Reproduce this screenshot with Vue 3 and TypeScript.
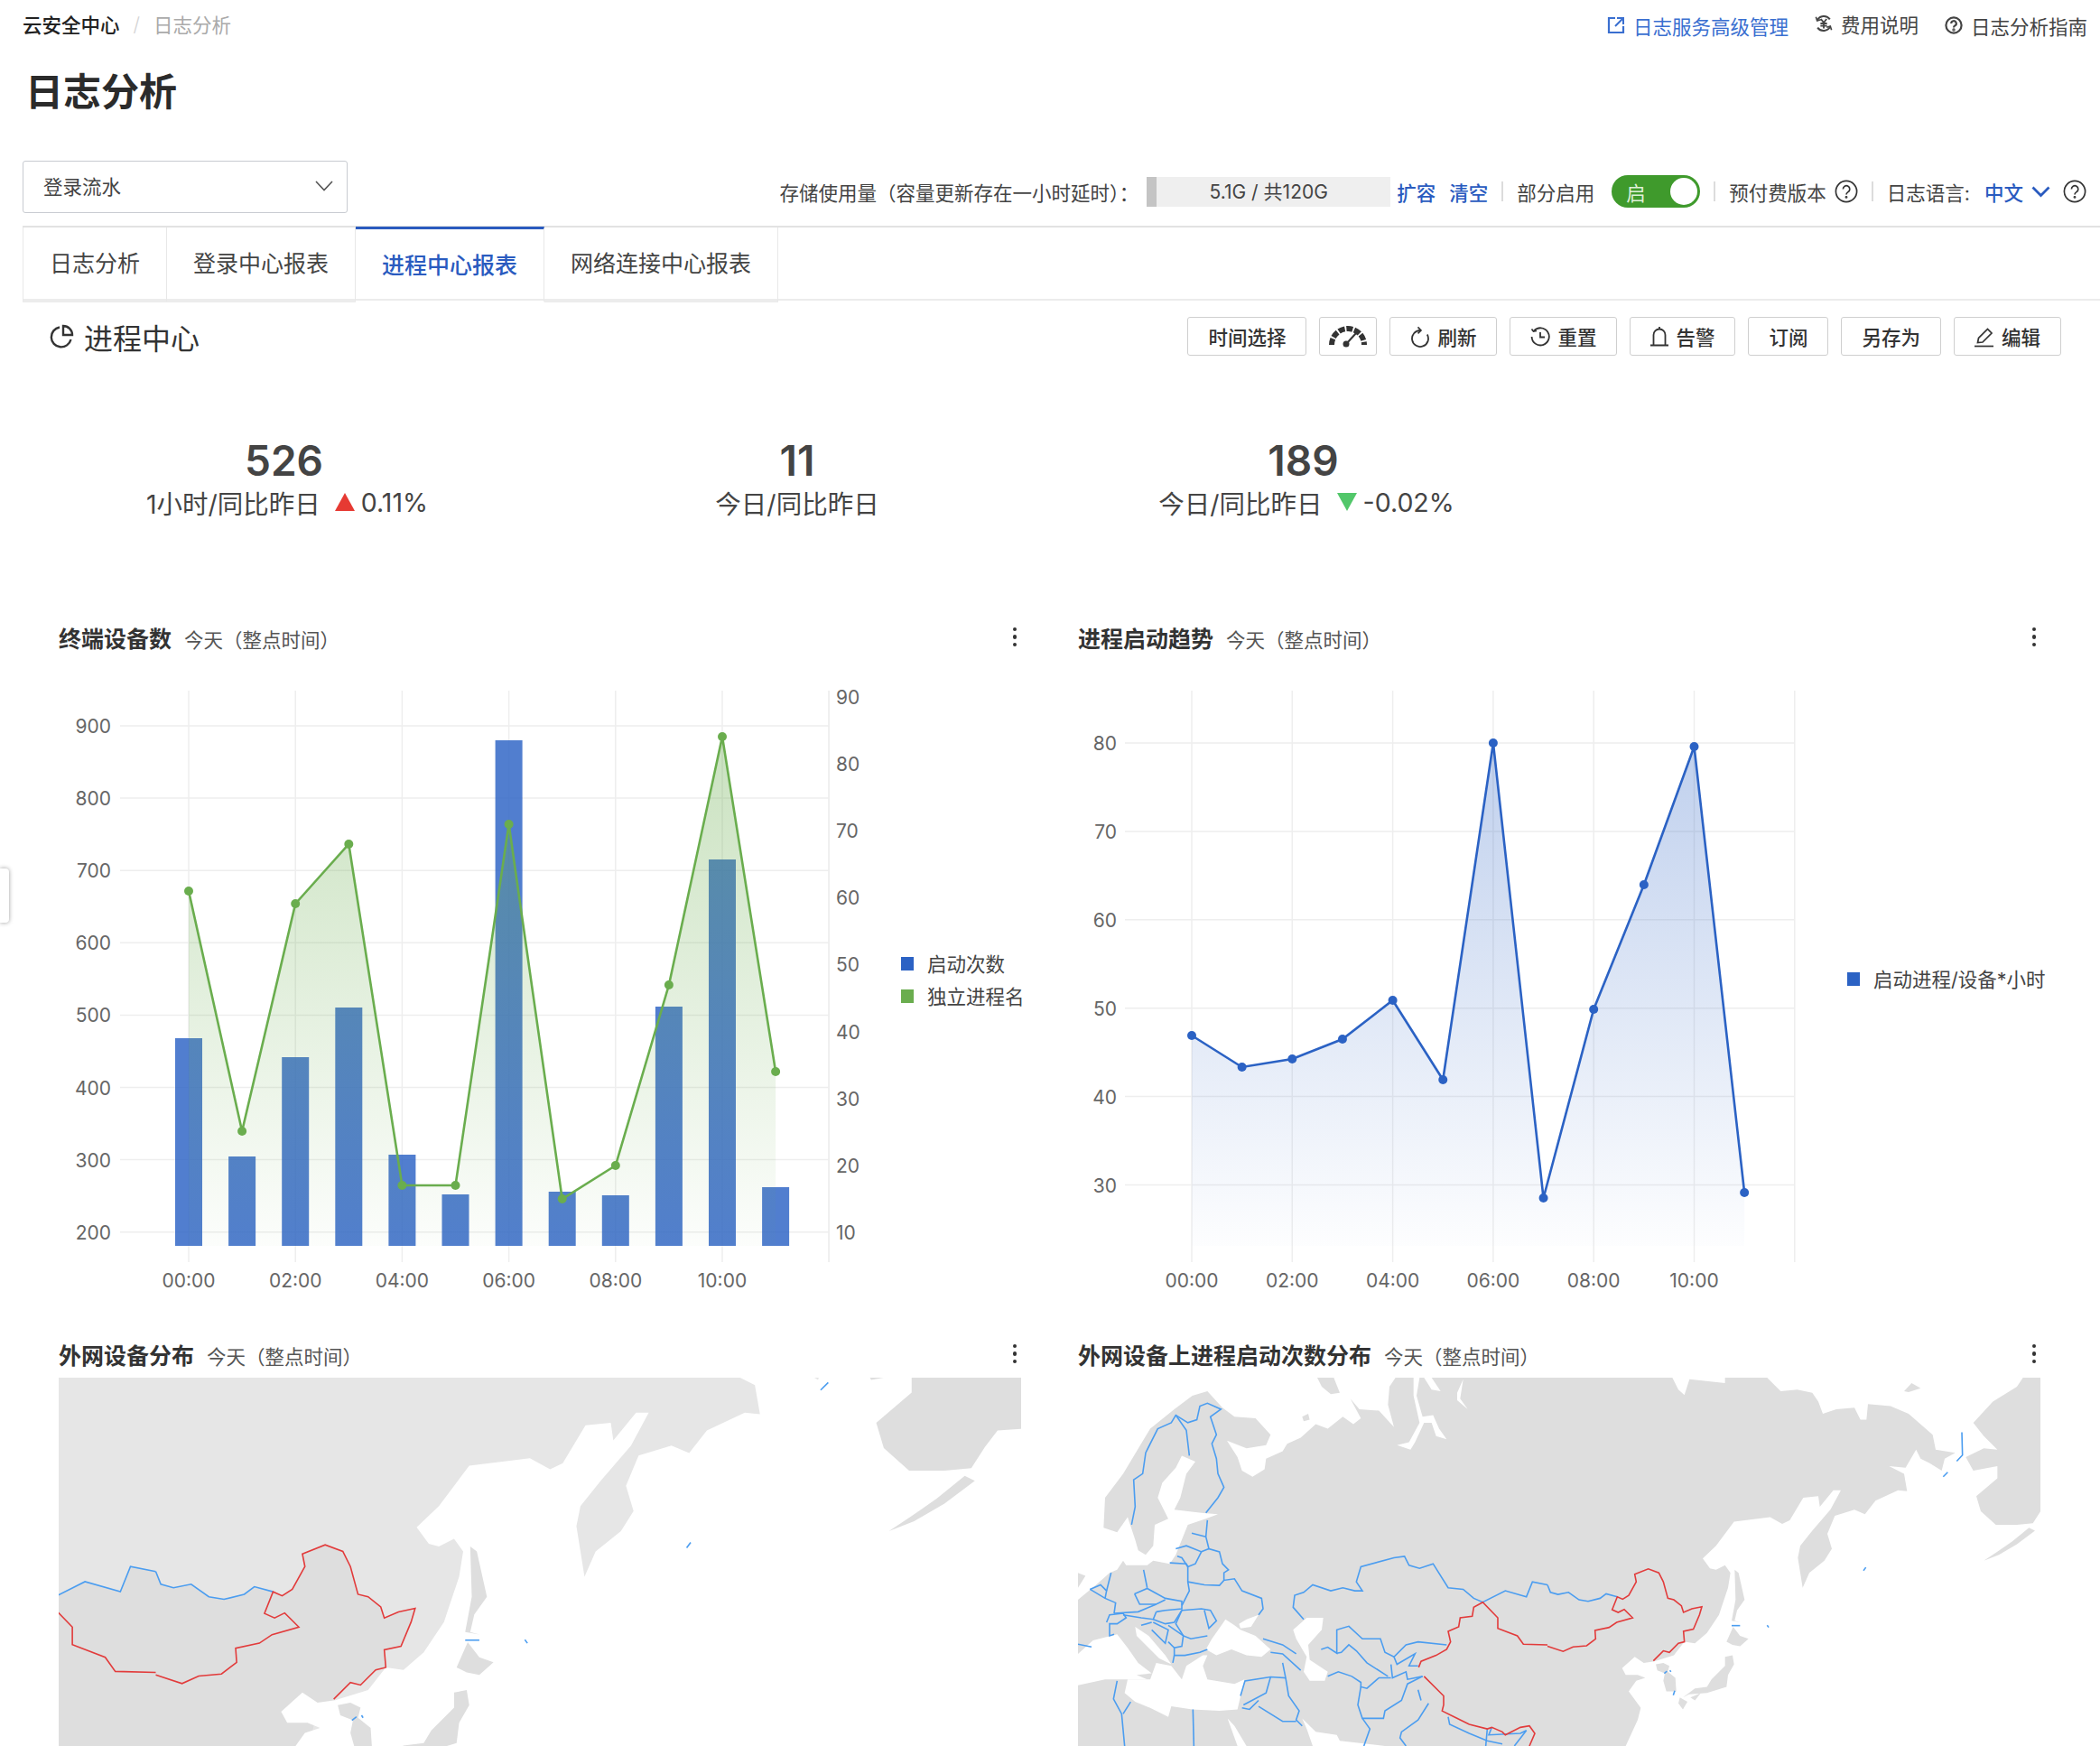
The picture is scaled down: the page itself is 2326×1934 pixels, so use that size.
<script setup lang="ts">
// 图表数据：y 值是按参考图量出来的画布坐标
const hours = ['00:00', '02:00', '04:00', '06:00', '08:00', '10:00']
const barTops = [1150, 1281, 1171, 1116, 1279, 1323, 820, 1320, 1324, 1115, 952, 1315]
const lineGreen = [987, 1253, 1001, 935, 1313, 1313, 913, 1328, 1291, 1091, 816, 1187]
const lineBlue = [1147, 1182, 1173, 1151, 1108, 1196, 823, 1327, 1118, 980, 827, 1321]

const baseY = 1380

const x1 = (i: number) => 209 + 59.1 * i
const x2 = (i: number) => 1320 + 55.65 * i

const linePts = (ys: number[], x: (i: number) => number) =>
  ys.map((y, i) => `${x(i)},${y}`).join(' ')
const areaPts = (ys: number[], x: (i: number) => number) =>
  `${x(0)},${baseY} ${linePts(ys, x)} ${x(ys.length - 1)},${baseY}`

const left1 = [900, 800, 700, 600, 500, 400, 300, 200].map((v, i) => ({ v, y: 804 + i * 80.1 }))
const right1 = [90, 80, 70, 60, 50, 40, 30, 20, 10].map((v, i) => ({ v, y: 772 + i * 74.1 }))
const left2 = [80, 70, 60, 50, 40, 30].map((v, i) => ({ v, y: 823 + i * 97.9 }))

const buttons = [
  { label: '时间选择' },
  { label: '', icon: 'gauge' },
  { label: '刷新', icon: 'refresh' },
  { label: '重置', icon: 'history' },
  { label: '告警', icon: 'bell' },
  { label: '订阅' },
  { label: '另存为' },
  { label: '编辑', icon: 'edit' },
]

const tabs = ['日志分析', '登录中心报表', '进程中心报表', '网络连接中心报表']

// 地图：W / E 是两段 3 倍坐标，东段整体右移 520
const seaWest = [
  '0,0 1055,0 1035,30 1030,90 1050,165 1000,110 935,105 905,70 940,135 915,155 880,130 830,170 790,155 740,200 695,220 680,245 625,270 620,305 580,330 545,310 530,265 495,210 560,235 625,225 640,190 590,135 520,130 480,100 430,45 380,60 320,105 240,170 150,320 90,400 85,500 130,515 165,465 190,540 200,575 225,590 250,560 255,490 300,470 265,400 280,350 325,300 345,260 390,280 360,320 340,400 320,440 410,450 465,455 425,470 365,490 345,540 325,590 305,620 250,610 230,625 160,625 150,610 130,640 105,650 60,690 0,740',
  '425,905 445,870 480,820 490,805 520,825 540,840 590,860 640,905 610,930 560,925 510,905 460,925',
  '535,820 560,805 600,790 575,830 540,835',
  '715,840 760,800 815,800 810,840 765,890 770,940 830,980 820,1010 770,1010 750,980 760,930 725,870',
  '0,920 50,875 130,855 165,900 200,950 245,985 195,990 230,1005 165,1005 90,1005 0,1025',
  '190,830 235,860 290,925 310,955 270,935 240,905 195,860',
  '165,1005 240,1005 260,950 310,960 345,1005 360,960 415,925 430,925 415,960 430,1005 520,1020 553,1005 530,1105 470,1110 380,1105 310,1095 300,1130 240,1100 190,1080 155,1050',
  '497,1135 530,1227 560,1227 520,1160',
  '745,1135 790,1180 860,1190 870,1210 1020,1227 780,1227 760,1170',
  '1115,0 1135,0 1125,60 1145,130 1180,125 1200,170 1225,205 1190,195 1175,150 1150,150 1120,215 1105,240 1060,225 1100,215 1135,150 1115,60',
  '1150,0 1175,0 1205,45 1175,40',
  '1280,5 1260,50 1260,75 1295,105 1270,70',
]
const islandWest = [
  '795,0 850,0 870,50 840,55 810,30',
  '745,130 765,120 770,140 750,145',
  '0,650 25,660 0,700',
]
const seaEast = [
  '260,1227 300,1140 310,1100 270,1045 295,1010 325,1000 300,990 260,990 248,968 290,930 320,950 355,945 420,925 455,880 490,885 530,850 570,790 600,700 608,650 590,625 560,640 540,635 516,602 560,560 620,480 740,465 780,487 805,475 850,400 900,395 905,430 950,375 975,375 940,440 880,510 840,560 832,600 848,700 870,650 920,610 945,570 930,520 955,460 1020,440 1055,455 1090,410 1165,375 1195,378 1185,320 1135,295 1190,300 1225,240 1240,270 1270,285 1310,310 1320,270 1355,250 1290,240 1280,190 1200,120 1140,95 1065,88 1060,140 1040,140 1020,100 960,105 915,120 900,80 880,50 830,40 775,45 730,0 730,-40 1900,-40 1900,1300 260,1300',
  '415,0 435,40 455,58 472,5 590,18 590,0',
]
const islandEast = [
  '1560,30 1480,80 1415,150 1450,195 1495,240 1450,235 1390,265 1415,310 1495,295 1495,335 1425,395 1440,445 1490,490 1560,490 1613,485 1640,443 1665,410 1711,407 1800,350 1800,-30 1600,-30',
  '1600,500 1620,510 1560,555 1500,590 1450,610 1495,580 1545,545',
  '622,640 635,650 655,740 630,775 622,810 640,815 612,810 625,740',
  '617,830 640,860 668,870 640,895 615,890 595,880',
  '615,925 620,955 600,990 595,1030 530,1050 470,1055 450,1065 490,1035 530,1030 545,1005 590,960 590,930',
  '440,1065 465,1080 450,1105 435,1085',
  '475,1065 510,1050 490,1075',
  '360,955 385,950 405,960 400,980 425,1000 428,1045 395,1045 385,1010 390,985 365,975',
  '1185,45 1210,18 1240,35 1200,48',
]
const chinaEast =
  '-215,748 -140,710 -70,730 -50,680 0,690 10,715 35,722 70,715 105,740 135,745 175,735 195,720 232,730 250,738 270,725 295,680 290,655 335,637 370,650 385,680 400,735 420,740 445,760 452,782 480,770 513,763 505,790 485,838 452,845 455,880 435,885 405,915 385,910 352,943 365,950 320,950 260,1300 -215,1300'

const blueWest = [
  '178,490 190,430 185,340 215,320 225,250 265,170 310,150 325,125 365,150 395,140 405,95 430,85 475,105 440,130 460,190 445,220 460,270 465,320 485,365 465,400 425,450',
  '325,125 360,175 370,260',
  '430,475 425,530 435,570 470,580 480,620 500,640 485,650 485,675 520,670 545,710 610,735 615,770 600,790',
  '378,518 425,530',
  '325,570 360,560 410,580 390,620 365,630 345,600 330,595',
  '410,580 435,570',
  '305,617 360,620 365,630 365,680 370,710 345,760',
  '365,680 420,690 470,692 485,675',
  '218,640 230,700',
  '188,720 230,702 290,735 345,745 345,760',
  '188,720 205,755 260,755 290,740',
  '260,780 290,775 345,770 345,760',
  '120,785 200,780 260,755',
  '260,780 250,805 210,800 150,790',
  '250,805 290,820 320,815 345,775',
  '345,775 410,770 440,775 460,810 435,835 420,775',
  '345,775 325,820 350,860 375,870 430,860',
  '95,815 105,790 150,785 160,800 130,820 105,820 105,860 120,855',
  '40,705 90,735 125,750 120,785',
  '40,705 75,690 95,710 90,735',
  '95,710 110,650',
  '245,840 290,885 300,840 250,815',
  '300,825 350,860 345,895 320,900 320,925 355,925 405,915 430,905',
  '300,880 320,900',
  '320,925 315,950',
  '210,825 245,815',
  '0,888 45,897',
  '750,805 715,765 720,725 750,715 780,690 840,710 880,700 920,710 945,710 925,680 940,630 1050,600 1085,595 1100,625 1135,635 1180,620 1230,700 1280,705 1315,735 1345,748 1420,710 1490,730 1510,680 1560,690',
  '808,905 830,898 860,918 860,840 900,828 945,870 1005,870 1020,915 1050,930 1090,890 1130,880 1225,890',
  '860,918 875,915 900,890 925,910 960,950 1030,995',
  '1040,955 1045,1000 1090,980 1095,1005 1145,995',
  '1050,930 1060,955 1120,920 1100,960 1130,960',
  '830,995 865,980 910,995 940,1015 940,1030 960,1035 1000,1000 1040,1000',
  '940,1030 930,1090 945,1135 1015,1135 1020,1110 1075,1075 1095,1020 1145,995',
  '945,1135 970,1170 950,1227',
  '615,870 680,890 725,920',
  '640,915 680,920 740,975',
  '680,950 690,1000 640,997 555,1010 540,1060',
  '690,1000 700,1060 735,1110 725,1140 745,1160',
  '640,997 625,1050 550,1090',
  '600,1075 570,1105 545,1100',
  '600,1095 680,1145 725,1145',
  '130,1010 118,1070 145,1120 155,1227',
  '175,1080 150,1120',
  '382,1105 385,1227',
  '1165,1085 1130,1140 1075,1180 1070,1200 1090,1227',
  '1230,1130 1235,1155 1300,1185 1360,1210 1410,1220',
  '1360,1170 1355,1227',
  '1375,1165 1365,1190 1470,1185 1490,1175 1450,1227',
  '1130,1040 1140,1075',
]
const redWest = [
  '1560,890 1480,888 1460,860 1395,835 1395,800 1345,748 1315,765 1310,795 1270,800 1265,830 1230,845 1238,880 1225,905 1190,925 1140,945 1132,965',
  '1150,995 1215,1060 1215,1090 1210,1110 1250,1130 1300,1155 1360,1170 1375,1165 1410,1180 1420,1190 1470,1165 1500,1160 1518,1185 1500,1227',
]
const blueEast = [
  '0,690 10,715 35,722 70,715 105,740 135,745 175,735 195,720 232,730',
  '1377,182 1379,258 1360,278',
  '1330,315 1315,330',
  '1058,632 1050,643',
  '612,826 640,826',
  '730,825 735,832',
  '388,985 397,978',
  '407,975 410,980',
  '423,1043 418,1058',
]
const redEast = [
  '352,943 385,910 405,915 435,885 455,880 452,845 485,838 505,790 513,763 480,770 452,782 445,760 420,740 400,735 385,680 370,650 335,637 290,655 295,680 270,725 250,738 232,730 215,773 235,782 255,772 283,800 230,815 205,832 158,842 160,870 130,893 85,897 52,912 0,895',
]

const maps = [
  { title: '外网设备分布', viewBox: '456 101.8 634.5 243.5', light: true },
  { title: '外网设备上进程启动次数分布', viewBox: '0 0 1066 409', light: false },
]
</script>

<template>
  <div class="page">
    <div class="side-handle"></div>

    <div class="topbar">
      <div class="crumb">
        <span class="crumb-root">云安全中心</span>
        <span class="crumb-sep">/</span>
        <span class="crumb-cur">日志分析</span>
      </div>
      <div class="top-links">
        <span class="top-link blue">
          <svg width="20" height="20" viewBox="0 0 20 20" fill="none" stroke="currentColor" stroke-width="2.2">
            <path d="M9 2H2v16h16v-7" />
            <path d="M11 2h7v7M18 2l-9 9" stroke-width="2" />
          </svg>
          日志服务高级管理
        </span>
        <span class="top-link raised">
          <svg width="20" height="20" viewBox="0 0 22 22" fill="none" stroke="#444" stroke-width="2.2">
            <path d="M3 7.5A9 9 0 0 1 18.5 6M19 14.5A9 9 0 0 1 3.5 16" />
            <path d="M1.5 3l1.5 4.6 4.5-1.2M20.5 19l-1.5-4.6-4.5 1.2" stroke-width="1.8" />
            <path d="M7.5 5.5L11 10l3.5-4.5M7 11h8M7 13.8h8M11 10v7" stroke-width="2" />
          </svg>
          费用说明
        </span>
        <span class="top-link">
          <svg width="20" height="20" viewBox="0 0 20 20" fill="none" stroke="#444" stroke-width="2.2">
            <circle cx="10" cy="10" r="8.6" />
            <path d="M7.2 8a2.8 2.8 0 1 1 4.2 2.4c-.9.6-1.4 1-1.4 2" />
            <circle cx="10" cy="15" r=".6" />
          </svg>
          日志分析指南
        </span>
      </div>
    </div>

    <h1 class="title">日志分析</h1>

    <div class="ctrl-row">
      <div class="select">
        <span>登录流水</span>
        <svg width="20" height="12" viewBox="0 0 20 12" fill="none" stroke="#555" stroke-width="1.6">
          <path d="M1 1l9 9.5L19 1" />
        </svg>
      </div>
      <div class="storage">
        <span>存储使用量（容量更新存在一小时延时）：</span>
        <div class="bar"><div class="bar-used"></div><div class="bar-text">5.1G / 共120G</div></div>
        <a class="act first">扩容</a>
        <a class="act second">清空</a>
        <i class="sep"></i>
        <span>部分启用</span>
        <div class="switch"><span>启</span><i class="knob"></i></div>
        <i class="sep"></i>
        <span>预付费版本</span>
        <svg class="q" width="26" height="26" viewBox="0 0 26 26" fill="none" stroke="#333" stroke-width="1.7">
          <circle cx="13" cy="13" r="11.6" />
          <path d="M9.4 10.4a3.7 3.7 0 1 1 5.6 3.2c-1.2.8-2 1.4-2 2.8" />
          <circle cx="13" cy="19.4" r=".6" />
        </svg>
        <i class="sep"></i>
        <span>日志语言:</span>
        <a class="act lang">中文</a>
        <svg class="lang-arrow" width="21" height="13" viewBox="0 0 21 13" fill="none" stroke="#2a5bbf" stroke-width="2.8">
          <path d="M1.5 1.5l9 9 9-9" />
        </svg>
        <svg class="q last" width="26" height="26" viewBox="0 0 26 26" fill="none" stroke="#333" stroke-width="1.7">
          <circle cx="13" cy="13" r="11.6" />
          <path d="M9.4 10.4a3.7 3.7 0 1 1 5.6 3.2c-1.2.8-2 1.4-2 2.8" />
          <circle cx="13" cy="19.4" r=".6" />
        </svg>
      </div>
    </div>

    <div class="tabs">
      <div v-for="(t, i) in tabs" :key="t" class="tab" :class="{ active: i === 2 }">{{ t }}</div>
    </div>

    <div class="section-head">
      <div class="section-title">
        <svg width="28" height="28" viewBox="0 0 28 28" fill="none" stroke="#333" stroke-width="2.4">
          <path d="M12 3.5A11 11 0 1 0 24.5 17" />
          <path d="M16 2v10h10A10 10 0 0 0 16 2z" />
        </svg>
        进程中心
      </div>
      <div class="btns">
        <button v-for="b in buttons" :key="b.label + b.icon" class="btn">
          <svg v-if="b.icon === 'gauge'" width="42" height="24" viewBox="0 0 42 24" fill="none" stroke="#333">
            <path d="M3 21A18 18 0 0 1 39 21" stroke-width="6" stroke-dasharray="7 1.8" />
            <path d="M30 8L20 19" stroke-width="2" />
            <circle cx="19" cy="20" r="3.5" fill="#333" stroke="none" />
          </svg>
          <svg v-else-if="b.icon === 'refresh'" width="22" height="24" viewBox="0 0 22 24" fill="none" stroke="#333" stroke-width="1.8">
            <path d="M18.8 9.5A9 9 0 1 1 11 5" />
            <path d="M8.5 1.4L12 5 8.5 8.4" stroke-width="1.6" />
          </svg>
          <svg v-else-if="b.icon === 'history'" width="22" height="22" viewBox="0 0 22 22" fill="none" stroke="#333" stroke-width="1.8">
            <path d="M4 4.5A9.6 9.6 0 1 1 1.6 11" />
            <path d="M1.5 2.5l2 2.6L7 4.5" stroke-width="1.7" />
            <path d="M11 6v5.5h5" />
          </svg>
          <svg v-else-if="b.icon === 'bell'" width="20" height="24" viewBox="0 0 20 24" fill="none" stroke="#333" stroke-width="1.8">
            <path d="M3.5 21V10a6.5 6.5 0 0 1 13 0v11" />
            <path d="M0 21.5h20M10 1v2.5" />
          </svg>
          <svg v-else-if="b.icon === 'edit'" width="22" height="24" viewBox="0 0 22 24" fill="none" stroke="#333" stroke-width="1.7">
            <path d="M3.5 18.5l1-5L14.5 3.5l4.5 4.5L9 18z" />
            <path d="M0 22.5h21" />
          </svg>
          <span v-if="b.label">{{ b.label }}</span>
        </button>
      </div>
    </div>

    <div class="kpis">
      <div class="kpi">
        <div class="kpi-num">526</div>
        <div class="kpi-label">1小时/同比昨日<i class="tri up"></i>0.11%</div>
      </div>
      <div class="kpi">
        <div class="kpi-num">11</div>
        <div class="kpi-label">今日/同比昨日</div>
      </div>
      <div class="kpi">
        <div class="kpi-num">189</div>
        <div class="kpi-label">今日/同比昨日<i class="tri down"></i>-0.02%</div>
      </div>
    </div>

    <div class="cards">
      <section class="card">
        <div class="card-head">
          <div><b>终端设备数</b><span class="sub">今天（整点时间）</span></div>
          <div class="dots"><i></i><i></i><i></i></div>
        </div>
        <svg class="chart" viewBox="65 732 1066 744" width="1066" height="744">
          <defs>
            <linearGradient id="gGreen" gradientUnits="userSpaceOnUse" x1="0" y1="816" x2="0" y2="1380">
              <stop offset="0" stop-color="#6aad4e" stop-opacity=".36" />
              <stop offset="1" stop-color="#6aad4e" stop-opacity=".02" />
            </linearGradient>
          </defs>
          <line v-for="t in left1" :key="t.v" x1="133" x2="918" :y1="t.y" :y2="t.y" class="grid" />
          <line v-for="i in 7" :key="i" :x1="209 + (i - 1) * 118.2" :x2="209 + (i - 1) * 118.2" y1="765" y2="1398" class="grid" />
          <line x1="918" x2="918" y1="765" y2="1398" class="grid" />
          <rect v-for="(y, i) in barTops" :key="i" :x="x1(i) - 15" :y="y" width="30" :height="baseY - y" class="bar-rect" />
          <polygon :points="areaPts(lineGreen, x1)" fill="url(#gGreen)" />
          <polyline :points="linePts(lineGreen, x1)" class="line-g" />
          <circle v-for="(y, i) in lineGreen" :key="i" :cx="x1(i)" :cy="y" r="5" fill="#6aad4e" />
          <text v-for="t in left1" :key="t.v" x="123" :y="t.y + 8" text-anchor="end" class="tick">{{ t.v }}</text>
          <text v-for="t in right1" :key="t.v" x="926" :y="t.y + 8" class="tick">{{ t.v }}</text>
          <text v-for="(h, i) in hours" :key="h" :x="209 + i * 118.2" y="1426" text-anchor="middle" class="tick">{{ h }}</text>
          <rect x="998" y="1060" width="14" height="15" fill="#2b62c4" />
          <text x="1027" y="1076" class="legend">启动次数</text>
          <rect x="998" y="1096" width="14" height="15" fill="#6aad4e" />
          <text x="1027" y="1112" class="legend">独立进程名</text>
        </svg>
      </section>

      <section class="card">
        <div class="card-head">
          <div><b>进程启动趋势</b><span class="sub">今天（整点时间）</span></div>
          <div class="dots"><i></i><i></i><i></i></div>
        </div>
        <svg class="chart" viewBox="1194 732 1066 744" width="1066" height="744">
          <defs>
            <linearGradient id="gBlue" gradientUnits="userSpaceOnUse" x1="0" y1="823" x2="0" y2="1380">
              <stop offset="0" stop-color="#2b62c4" stop-opacity=".3" />
              <stop offset="1" stop-color="#2b62c4" stop-opacity=".01" />
            </linearGradient>
          </defs>
          <line v-for="t in left2" :key="t.v" x1="1246" x2="1987" :y1="t.y" :y2="t.y" class="grid" />
          <line v-for="i in 7" :key="i" :x1="1320 + (i - 1) * 111.3" :x2="1320 + (i - 1) * 111.3" y1="765" y2="1398" class="grid" />
          <polygon :points="areaPts(lineBlue, x2)" fill="url(#gBlue)" />
          <polyline :points="linePts(lineBlue, x2)" class="line-b" />
          <circle v-for="(y, i) in lineBlue" :key="i" :cx="x2(i)" :cy="y" r="5" fill="#2b62c4" />
          <text v-for="t in left2" :key="t.v" x="1237" :y="t.y + 8" text-anchor="end" class="tick">{{ t.v }}</text>
          <text v-for="(h, i) in hours" :key="h" :x="1320 + i * 111.3" y="1426" text-anchor="middle" class="tick">{{ h }}</text>
          <rect x="2046" y="1077" width="14" height="15" fill="#2b62c4" />
          <text x="2075" y="1093" class="legend">启动进程/设备*小时</text>
        </svg>
      </section>

      <section v-for="m in maps" :key="m.title" class="card">
        <div class="card-head">
          <div><b>{{ m.title }}</b><span class="sub">今天（整点时间）</span></div>
          <div class="dots"><i></i><i></i><i></i></div>
        </div>
        <svg class="map" :viewBox="m.viewBox" width="1066" height="408" preserveAspectRatio="none">
          <rect x="-200" y="-200" width="1600" height="900" :fill="m.light ? '#e6e6e6' : '#dedede'" />
          <g transform="translate(520,0) scale(.33333)">
            <polygon v-if="m.light" :points="chinaEast" fill="#dedede" />
            <polygon v-for="p in seaEast" :key="p" :points="p" fill="#fff" />
            <polygon v-for="p in islandEast" :key="p" :points="p" fill="#dedede" />
            <polyline v-for="p in blueEast" :key="p" :points="p" class="blue-line" />
            <polyline v-for="p in redEast" :key="p" :points="p" class="red-line" />
          </g>
          <g transform="scale(.33333)">
            <polygon v-for="p in seaWest" :key="p" :points="p" fill="#fff" />
            <polygon v-for="p in islandWest" :key="p" :points="p" fill="#dedede" />
            <polyline v-for="p in blueWest" :key="p" :points="p" class="blue-line" />
            <polyline v-for="p in redWest" :key="p" :points="p" class="red-line" />
          </g>
        </svg>
      </section>
    </div>
  </div>
</template>

<style scoped>
.page {
  position: relative;
  width: 2326px;
  height: 1934px;
  overflow: hidden;
  background: #fff;
  padding-left: 25px;
  box-sizing: border-box;
  color: #333;
  font-family: Inter, 'Noto Sans CJK SC', sans-serif;
  font-size: 21.5px;
}

/* 左侧收起把手 */
.side-handle {
  position: absolute;
  left: 0;
  top: 962px;
  width: 10px;
  height: 60px;
  background: #fff;
  border-radius: 0 4px 4px 0;
  box-shadow: 0 0 5px rgba(0, 0, 0, 0.4);
}

.topbar {
  display: flex;
  justify-content: space-between;
  align-items: center;
  height: 56px;
  padding-right: 14px;
}
.crumb {
  display: flex;
  align-items: center;
  margin-bottom: 3px;
}
.crumb-root {
  color: #222;
  font-weight: 500;
}
.crumb-sep {
  color: #d4d4d4;
  margin: 0 15px;
  font-weight: 300;
}
.crumb-cur {
  color: #aaa;
}
.top-links {
  display: flex;
  align-items: center;
  gap: 29px;
}
.top-link {
  display: flex;
  align-items: center;
  gap: 9px;
  color: #444;
}
.top-link.blue {
  color: #3a6fd0;
}
.top-link.raised {
  margin-bottom: 4px;
}

.title {
  margin: 0 0 0 3px;
  height: 92px;
  line-height: 92px;
  font-size: 42px;
  font-weight: 600;
  color: #2b2b2b;
}

.ctrl-row {
  display: flex;
  justify-content: space-between;
  align-items: flex-end;
  margin-top: 30px;
  padding-right: 15px;
  height: 58px;
}
.select {
  box-sizing: border-box;
  width: 360px;
  height: 58px;
  padding: 0 15px 3px 22px;
  display: flex;
  justify-content: space-between;
  align-items: center;
  border: 1.5px solid #c8cbd1;
  border-radius: 3px;
  color: #444;
}
.storage {
  display: flex;
  align-items: center;
  height: 38px;
  margin-bottom: 5px;
  color: #444;
}
.bar {
  position: relative;
  width: 270px;
  height: 33px;
  background: #efefef;
  margin-left: 9px;
}
.bar-used {
  width: 11px;
  height: 100%;
  background: #c4c4c4;
}
.bar-text {
  position: absolute;
  inset: 0;
  text-align: center;
  line-height: 33px;
  font-size: 21px;
}
.act {
  color: #2a5bbf;
  font-weight: 500;
}
.act.first {
  margin-left: 7px;
}
.act.second {
  margin-left: 15px;
}
.act.lang {
  margin-left: 16px;
}
.sep {
  width: 2px;
  height: 22px;
  background: #dcdcdc;
  margin: 0 15px;
}
.switch {
  box-sizing: border-box;
  width: 98px;
  height: 36px;
  margin-left: 19px;
  padding: 0 3px 0 16px;
  border-radius: 18px;
  background: #3f9a2c;
  display: flex;
  justify-content: space-between;
  align-items: center;
  color: #dff0d8;
}
.knob {
  width: 30px;
  height: 30px;
  border-radius: 50%;
  background: #fff;
}
.q {
  margin-left: 9px;
}
.q.last {
  margin-left: 14px;
}
.lang-arrow {
  margin-left: 9px;
}

.tabs {
  display: flex;
  margin-top: 14px;
  height: 83px;
  box-sizing: border-box;
  border-top: 2px solid #e2e2e2;
  border-bottom: 2px solid #ececec;
  font-size: 25px;
}
.tab {
  box-sizing: border-box;
  height: 83px;
  margin-bottom: -2px;
  line-height: 80px;
  padding: 0 29px;
  border-right: 1px solid #e8e8e8;
  border-bottom: 2px solid #ececec;
  color: #444;
}
.tab:first-child {
  border-left: 1px solid #e8e8e8;
}
.tab.active {
  margin-top: -1px;
  height: 84px;
  border-top: 3px solid #2a5bbf;
  border-bottom: 2px solid #fff;
  color: #2a5bbf;
  font-weight: 500;
}

.section-head {
  box-sizing: border-box;
  display: flex;
  justify-content: space-between;
  align-items: center;
  height: 84px;
  padding: 0 43px 5px 29px;
}
.section-title {
  display: flex;
  align-items: center;
  gap: 11px;
  font-size: 32px;
}
.btns {
  display: flex;
  gap: 14px;
}
.btn {
  box-sizing: border-box;
  height: 43px;
  padding: 0 22px;
  display: flex;
  align-items: center;
  gap: 8px;
  background: #fff;
  border: 1.5px solid #cfcfcf;
  border-radius: 3px;
  font-family: inherit;
  font-size: 21.5px;
  font-weight: 500;
  color: #333;
}
.btn:nth-child(2) {
  padding: 0 10px;
}

.kpis {
  display: grid;
  grid-template-columns: 570px 560px 568px;
  margin: 65px 0 0 8px;
}
.kpi {
  text-align: center;
}
.kpi:nth-child(odd) .kpi-num {
  padding-right: 7px;
}
.kpi-num {
  height: 56px;
  line-height: 56px;
  font-size: 46px;
  font-weight: 600;
  color: #444;
}
.kpi-label {
  display: flex;
  justify-content: center;
  align-items: center;
  height: 36px;
  font-size: 28.5px;
  color: #444;
}
.tri {
  width: 0;
  height: 0;
  margin: 0 7px 0 16px;
  border-left: 11px solid transparent;
  border-right: 11px solid transparent;
}
.tri.up {
  border-bottom: 20px solid #e63a33;
}
.tri.down {
  border-top: 20px solid #52c76a;
}

.cards {
  display: grid;
  grid-template-columns: 1066px 1066px;
  column-gap: 63px;
  margin: 108px 0 0 40px;
}
.card-head {
  box-sizing: border-box;
  display: flex;
  justify-content: space-between;
  align-items: center;
  height: 50px;
  padding: 0 5px 3px 0;
  font-size: 25px;
}
.card-head b {
  font-weight: 700;
  color: #333;
}
.sub {
  margin-left: 14px;
  font-size: 21.5px;
  color: #555;
}
.dots {
  display: flex;
  flex-direction: column;
  gap: 4px;
}
.dots i {
  width: 4.5px;
  height: 4.5px;
  border-radius: 50%;
  background: #333;
}
.chart,
.map {
  display: block;
}
.chart {
  overflow: visible;
}
.grid {
  stroke: #eeeeee;
  stroke-width: 1.5;
}
.bar-rect {
  fill: #2b62c4;
  opacity: 0.82;
}
.line-g {
  fill: none;
  stroke: #6aad4e;
  stroke-width: 2.6;
}
.line-b {
  fill: none;
  stroke: #2b62c4;
  stroke-width: 2.6;
}
.tick {
  font-size: 21px;
  fill: #666;
}
.legend {
  font-size: 21.5px;
  fill: #444;
}
.blue-line,
.red-line {
  fill: none;
  stroke-width: 1.6;
  vector-effect: non-scaling-stroke;
}
.blue-line {
  stroke: #4b9df0;
}
.red-line {
  stroke: #e23b3b;
}
</style>
